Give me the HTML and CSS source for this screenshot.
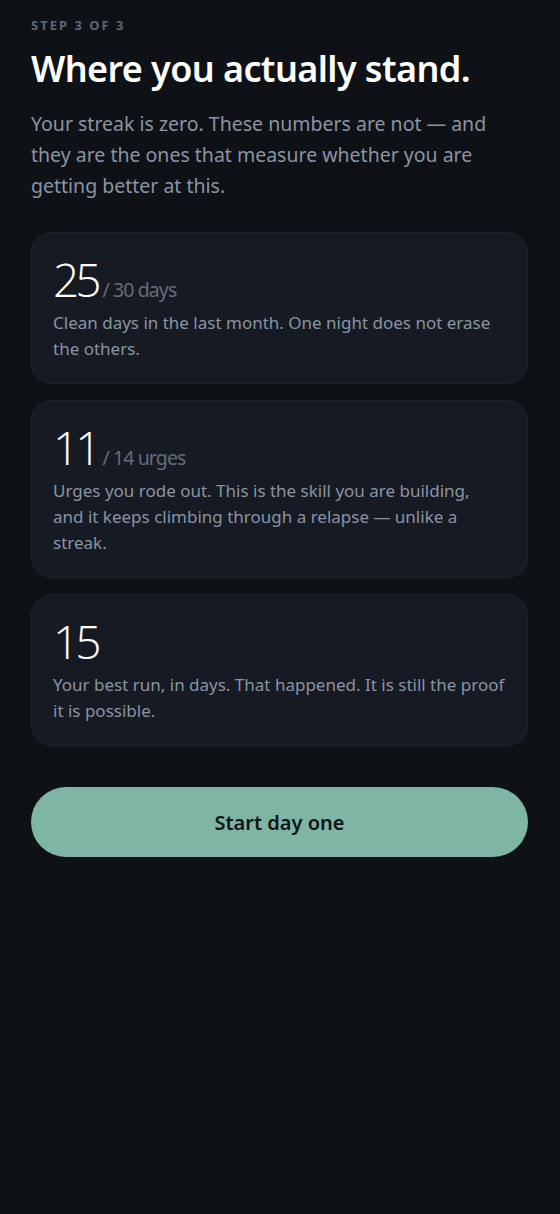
FILE: index.html
```html
<!DOCTYPE html>
<html lang="en">
<head>
    <meta charset="UTF-8">
    <meta name="viewport" content="width=device-width, initial-scale=1.0">
    <title>Where you actually stand</title>
    <link rel="stylesheet" href="styles.css">
</head>
<body>
    <div class="screen">
        <div class="step">Step 3 of 3</div>
        <h1>Where you actually stand.</h1>
        <p class="intro">Your streak is zero. These numbers are not — and they are the ones that measure whether you are getting better at this.</p>

        <div class="stats">
            <div class="stat-card">
                <div class="stat-value">25<span class="stat-unit">/ 30 days</span></div>
                <p class="stat-desc">Clean days in the last month. One night does not erase the others.</p>
            </div>
            <div class="stat-card">
                <div class="stat-value">11<span class="stat-unit">/ 14 urges</span></div>
                <p class="stat-desc">Urges you rode out. This is the skill you are building, and&nbsp;it keeps climbing through a relapse — unlike a streak.</p>
            </div>
            <div class="stat-card">
                <div class="stat-value">15</div>
                <p class="stat-desc">Your best run, in days. That happened. It is still the proof it is possible.</p>
            </div>
        </div>

        <button class="start-btn">Start day one</button>
    </div>
</body>
</html>
```

FILE: styles.css
```css
* {
    box-sizing: border-box;
}
body {
    margin: 0;
    background-color: #0e1116;
    font-family: "Noto Sans", "Open Sans", sans-serif;
    color: #f4f6f8;
    min-height: 1214px;
}
.screen {
    padding: 16px 32px 40px 31px;
}
.step {
    font-size: 13px;
    font-weight: 700;
    letter-spacing: 2px;
    text-transform: uppercase;
    color: #5d6774;
    line-height: 18px;
}
h1 {
    margin: 11px 0 0;
    font-size: 36px;
    font-weight: 600;
    line-height: 48px;
    letter-spacing: -0.6px;
    color: #ffffff;
}
.intro {
    margin: 15px 0 0;
    font-size: 19.5px;
    line-height: 31px;
    color: #8a94a3;
}
.stats {
    display: flex;
    flex-direction: column;
    gap: 16px;
    margin-top: 31px;
}
.stat-card {
    background-color: #161a22;
    border: 1px solid #1f2530;
    border-radius: 21px;
    padding: 15px 21px 21px;
}
.stat-value {
    font-family: "Open Sans", "Noto Sans", sans-serif;
    font-size: 46px;
    font-weight: 300;
    line-height: 62px;
    letter-spacing: -4px;
    color: #ffffff;
}
.stat-unit {
    font-family: "Noto Sans", sans-serif;
    font-size: 19.5px;
    font-weight: 400;
    line-height: 20px;
    letter-spacing: -0.9px;
    color: #646d7a;
    margin-left: 5px;
}
.stat-desc {
    margin: 0;
    font-size: 17px;
    line-height: 26px;
    color: #8a94a3;
}
.start-btn {
    display: block;
    width: 100%;
    height: 70px;
    margin-top: 41px;
    border: none;
    border-radius: 35px;
    background-color: #7fb5a5;
    color: #111418;
    font-family: inherit;
    font-size: 20px;
    font-weight: 600;
    cursor: pointer;
}
```
